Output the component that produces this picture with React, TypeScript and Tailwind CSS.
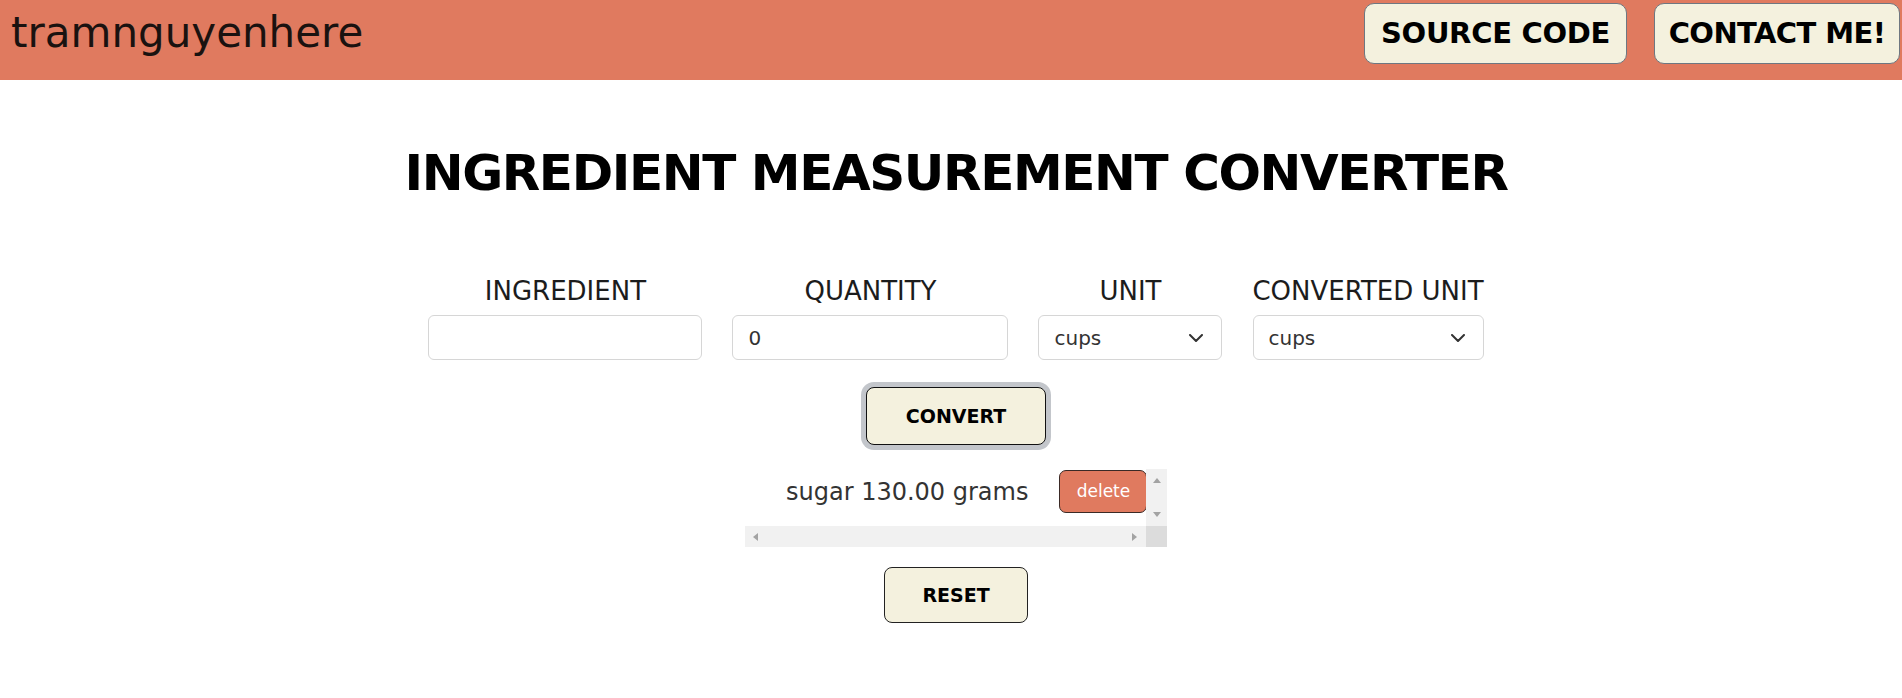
import { ChangeEvent, ReactNode, useState } from "react";

const units = ["cups", "grams", "tablespoons", "teaspoons", "ounces"];

const Field = ({ label, children }: { label: string; children: ReactNode }) => (
  <div className="flex flex-col items-center">
    <label className="text-[26px] leading-[30px] text-[#1c1c1c] whitespace-nowrap">
      {label}
    </label>
    <div className="mt-[9px]">{children}</div>
  </div>
);

const UnitSelect = ({ width }: { width: string }) => (
  <div className={`relative ${width}`}>
    <select
      defaultValue="cups"
      className="w-full h-[45px] appearance-none rounded-[6px] border border-[#d6d6d6] bg-white pl-[15px] text-[20px] text-[#333] outline-none"
    >
      {units.map((u) => (
        <option key={u} value={u}>
          {u}
        </option>
      ))}
    </select>
    <svg
      className="pointer-events-none absolute right-[19px] top-[19px]"
      width="14"
      height="8"
      viewBox="0 0 14 8"
      fill="none"
    >
      <path d="M1 1l6 6 6-6" stroke="#333" strokeWidth="2" strokeLinecap="round" strokeLinejoin="round" />
    </svg>
  </div>
);

const Arrow = ({ dir }: { dir: "up" | "down" | "left" | "right" }) => {
  const points = {
    up: "0,6 4,1 8,6",
    down: "0,1 4,6 8,1",
    left: "6,0 1,4 6,8",
    right: "1,0 6,4 1,8",
  }[dir];
  const vertical = dir === "up" || dir === "down";
  return (
    <svg width={vertical ? 8 : 7} height={vertical ? 7 : 8} viewBox={vertical ? "0 0 8 7" : "0 0 7 8"}>
      <polygon points={points} fill="#a3a3a3" />
    </svg>
  );
};

const App = () => {
  const [ingredient, setIngredient] = useState("");
  const [quantity, setQuantity] = useState("0");
  const [results, setResults] = useState([{ id: 1, text: "sugar 130.00 grams" }]);

  return (
    <div className="min-h-screen bg-white font-['DejaVu_Sans',sans-serif] text-[#1c1c1c]">
      <header className="flex h-[80px] items-start justify-between bg-[#e07a5f] pl-[11px] pr-[2px]">
        <div className="mt-[12px] text-[42px] leading-none text-[#1a1210]">tramnguyenhere</div>
        <nav className="mt-[3px] flex gap-[27px]">
          <a className="flex h-[61px] w-[263px] items-center justify-center rounded-[10px] border border-[#6e7781] bg-[#f4f1de] text-[29px] font-bold tracking-[-0.3px] text-black">
            SOURCE CODE
          </a>
          <a className="flex h-[61px] w-[246px] items-center justify-center rounded-[10px] border border-[#6e7781] bg-[#f4f1de] text-[29px] font-bold tracking-[-0.6px] text-black">
            CONTACT ME!
          </a>
        </nav>
      </header>

      <main className="flex flex-col items-center pl-[10px]">
        <h1 className="mt-[68px] text-[50px] font-bold leading-none tracking-[-1.4px] text-black">
          INGREDIENT MEASUREMENT CONVERTER
        </h1>

        <div className="mt-[78px] flex items-start gap-[30px]">
          <Field label="INGREDIENT">
            <input
              value={ingredient}
              onChange={(e: ChangeEvent<HTMLInputElement>) => setIngredient(e.target.value)}
              className="h-[45px] w-[274px] rounded-[6px] border border-[#d6d6d6] bg-white pl-[15px] text-[20px] text-[#333] outline-none"
            />
          </Field>
          <Field label="QUANTITY">
            <input
              value={quantity}
              onChange={(e: ChangeEvent<HTMLInputElement>) => setQuantity(e.target.value)}
              className="h-[45px] w-[276px] rounded-[6px] border border-[#d6d6d6] bg-white pl-[15px] text-[20px] text-[#333] outline-none"
            />
          </Field>
          <Field label="UNIT">
            <UnitSelect width="w-[184px]" />
          </Field>
          <Field label="CONVERTED UNIT">
            <UnitSelect width="w-[231px]" />
          </Field>
        </div>

        <button className="mt-[27px] h-[58px] w-[180px] rounded-[8px] border-[1.5px] border-[#111] bg-[#f4f1de] text-[19px] font-bold text-black ring-[5px] ring-[#c3c6cb]">
          CONVERT
        </button>

        <div className="mt-[24px] flex w-[422px] flex-col">
          <div className="flex h-[57px]">
            <div className="flex flex-1 items-start overflow-hidden pl-[41px] pt-[1px]">
              {results.map((r) => (
                <div key={r.id} className="flex shrink-0 items-center gap-[31px]">
                  <span className="whitespace-nowrap text-[24px] text-[#333]">{r.text}</span>
                  <button
                    onClick={() => setResults(results.filter((x) => x.id !== r.id))}
                    className="h-[43px] w-[88px] rounded-[7px] border border-[#3a2a26] bg-[#e07a5f] text-[17px] text-white"
                  >
                    delete
                  </button>
                </div>
              ))}
            </div>
            <div className="flex w-[21px] flex-col items-center justify-between bg-[#f1f1f1] pb-[8px] pt-[8px]">
              <Arrow dir="up" />
              <Arrow dir="down" />
            </div>
          </div>
          <div className="flex h-[21px]">
            <div className="flex flex-1 items-center justify-between bg-[#f1f1f1] pl-[7px] pr-[8px]">
              <Arrow dir="left" />
              <Arrow dir="right" />
            </div>
            <div className="w-[21px] bg-[#dcdcdc]" />
          </div>
        </div>

        <button className="mt-[20px] h-[56px] w-[144px] rounded-[8px] border border-[#222] bg-[#f4f1de] text-[19px] font-bold text-black">
          RESET
        </button>
      </main>
    </div>
  );
};

export default App;
